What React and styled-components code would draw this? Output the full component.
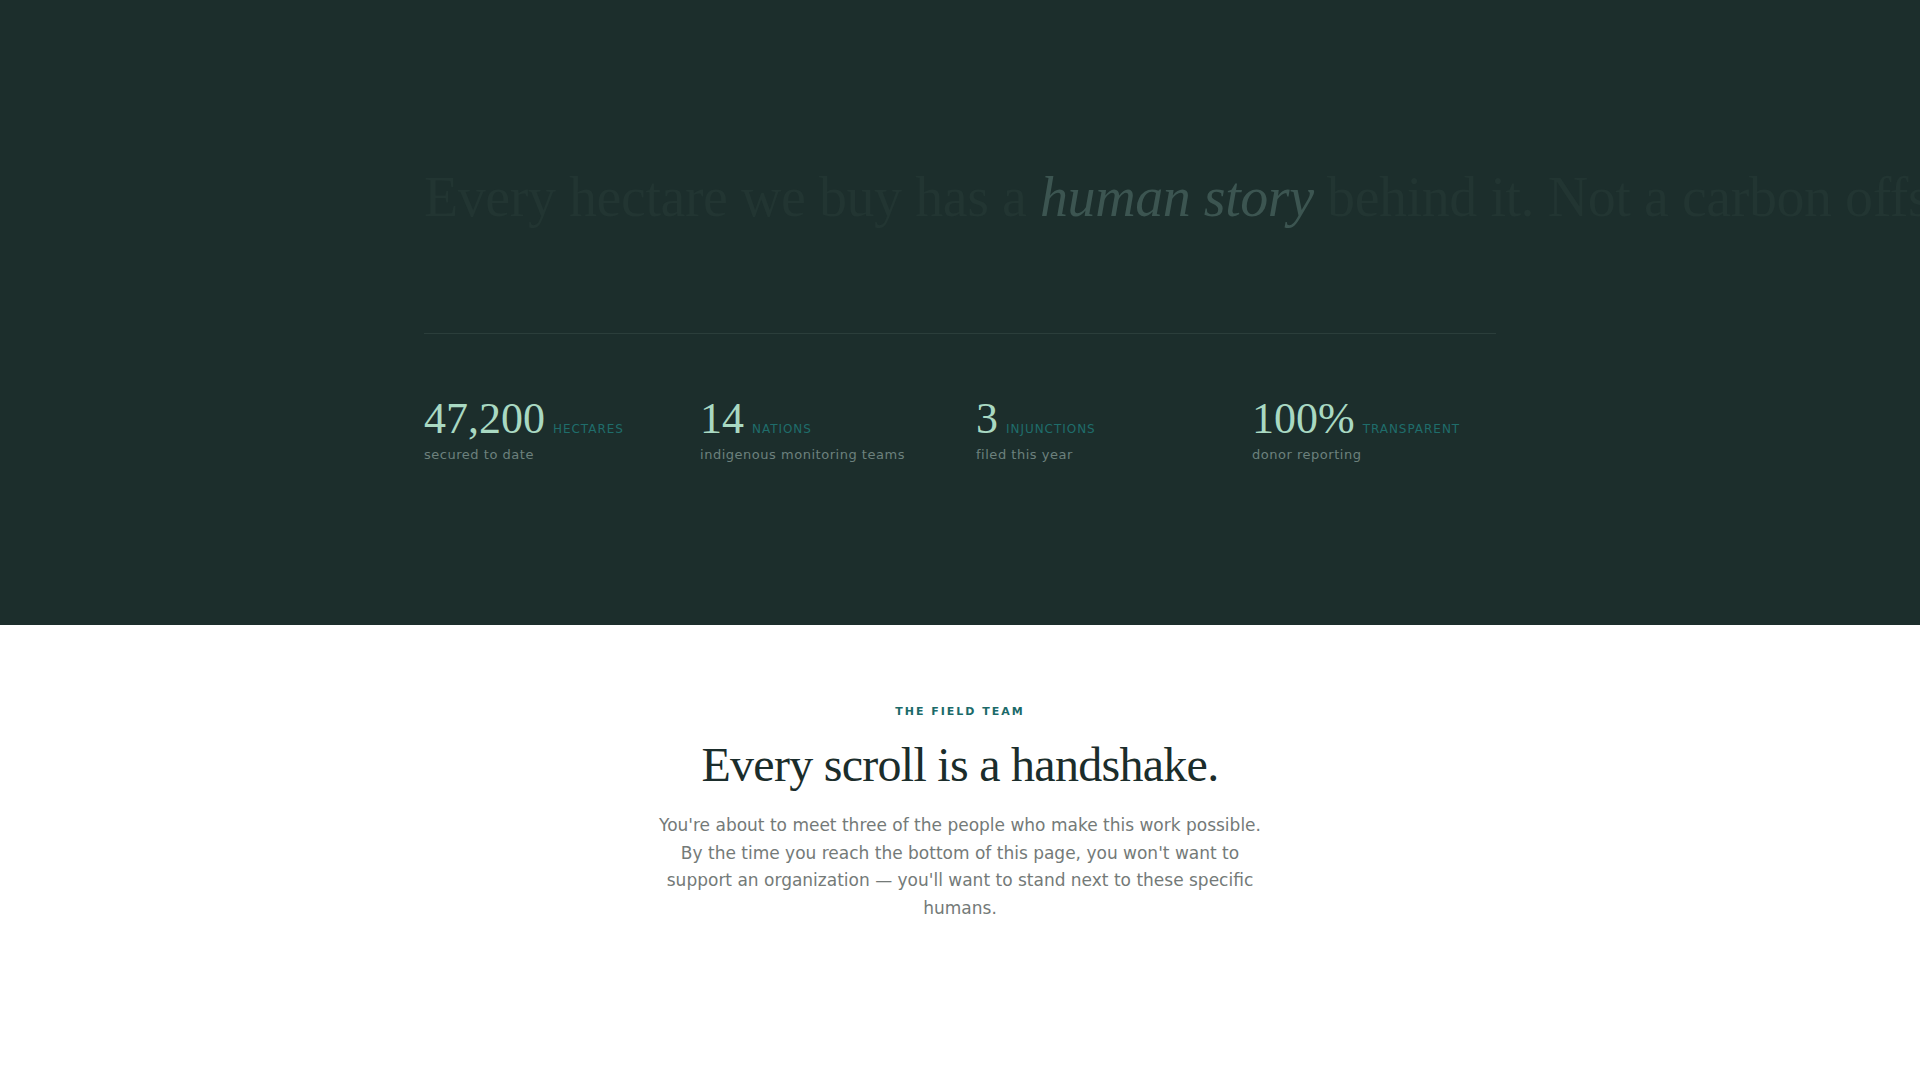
import React from "react";
import styled, { createGlobalStyle } from "styled-components";

const GlobalStyle = createGlobalStyle`
  html, body {
    margin: 0;
    padding: 0;
    background: #ffffff;
    overflow-x: hidden;
  }
  body {
    font-family: "DejaVu Sans", sans-serif;
  }
`

const Page = styled.div`
  min-height: 1080px;
  background: #ffffff;
`

const DarkSection = styled.section`
  background-color: #1c2e2c;
  padding: 164px 0 160px;
  overflow: hidden;
`

const Container = styled.div`
  max-width: 1200px;
  margin: 0 auto;
  padding: 0 64px;
  box-sizing: border-box;
`

const Headline = styled.h1`
  margin: 0;
  font-family: "Liberation Serif", serif;
  font-weight: 400;
  font-size: 56px;
  line-height: 1.2;
  letter-spacing: -0.008em;
  white-space: nowrap;
  color: #223532;
`

const Emphasis = styled.em`
  font-style: italic;
  color: #3c5551;
`

const Divider = styled.hr`
  margin: 102px 0 0;
  border: 0;
  border-top: 1px solid #2b3e3b;
`

const StatsGrid = styled.div`
  display: grid;
  grid-template-columns: repeat(4, 1fr);
  gap: 32px;
  padding-top: 63px;
`

const Stat = styled.div`
  display: flex;
  flex-direction: column;
`

const StatTop = styled.div`
  display: flex;
  align-items: baseline;
  gap: 8px;
`

const StatNumber = styled.span`
  font-family: "Liberation Serif", serif;
  font-size: 44px;
  line-height: 1;
  color: #a9d9c2;
`

const StatUnit = styled.span`
  font-family: "DejaVu Sans", sans-serif;
  font-size: 12px;
  letter-spacing: 0.08em;
  text-transform: uppercase;
  color: #1f6d6b;
`

const StatLabel = styled.span`
  margin-top: 4px;
  font-size: 13px;
  line-height: 20px;
  letter-spacing: 0.04em;
  color: #6c817d;
`

const TeamSection = styled.section`
  padding: 79px 24px 120px;
  display: flex;
  flex-direction: column;
  align-items: center;
  text-align: center;
`

const Eyebrow = styled.span`
  font-size: 11px;
  line-height: 16.5px;
  font-weight: 700;
  letter-spacing: 0.18em;
  text-transform: uppercase;
  color: #1b6a69;
`

const TeamTitle = styled.h2`
  margin: 16px 0 0;
  font-family: "Liberation Serif", serif;
  font-weight: 400;
  font-size: 48px;
  line-height: 1.15;
  letter-spacing: -0.015em;
  color: #1b2d2b;
`

const Intro = styled.p`
  margin: 20px 0 0;
  max-width: 620px;
  font-size: 17px;
  line-height: 1.635;
  color: #747a78;
`

const stats = [
  { value: "47,200", unit: "hectares", label: "secured to date" },
  { value: "14", unit: "nations", label: "indigenous monitoring teams" },
  { value: "3", unit: "injunctions", label: "filed this year" },
  { value: "100%", unit: "transparent", label: "donor reporting" },
]

export default function App() {
  return (
    <Page>
      <GlobalStyle />
      <DarkSection>
        <Container>
          <Headline>
            Every hectare we buy has a <Emphasis>human story</Emphasis> behind it. Not a carbon offset.
          </Headline>
          <Divider />
          <StatsGrid>
            {stats.map((s) => (
              <Stat key={s.unit}>
                <StatTop>
                  <StatNumber>{s.value}</StatNumber>
                  <StatUnit>{s.unit}</StatUnit>
                </StatTop>
                <StatLabel>{s.label}</StatLabel>
              </Stat>
            ))}
          </StatsGrid>
        </Container>
      </DarkSection>
      <TeamSection>
        <Eyebrow>The field team</Eyebrow>
        <TeamTitle>Every scroll is a handshake.</TeamTitle>
        <Intro>
          You're about to meet three of the people who make this work possible. By the time you reach the bottom of this page, you won't want to support an organization — you'll want to stand next to these specific humans.
        </Intro>
      </TeamSection>
    </Page>
  );
}
